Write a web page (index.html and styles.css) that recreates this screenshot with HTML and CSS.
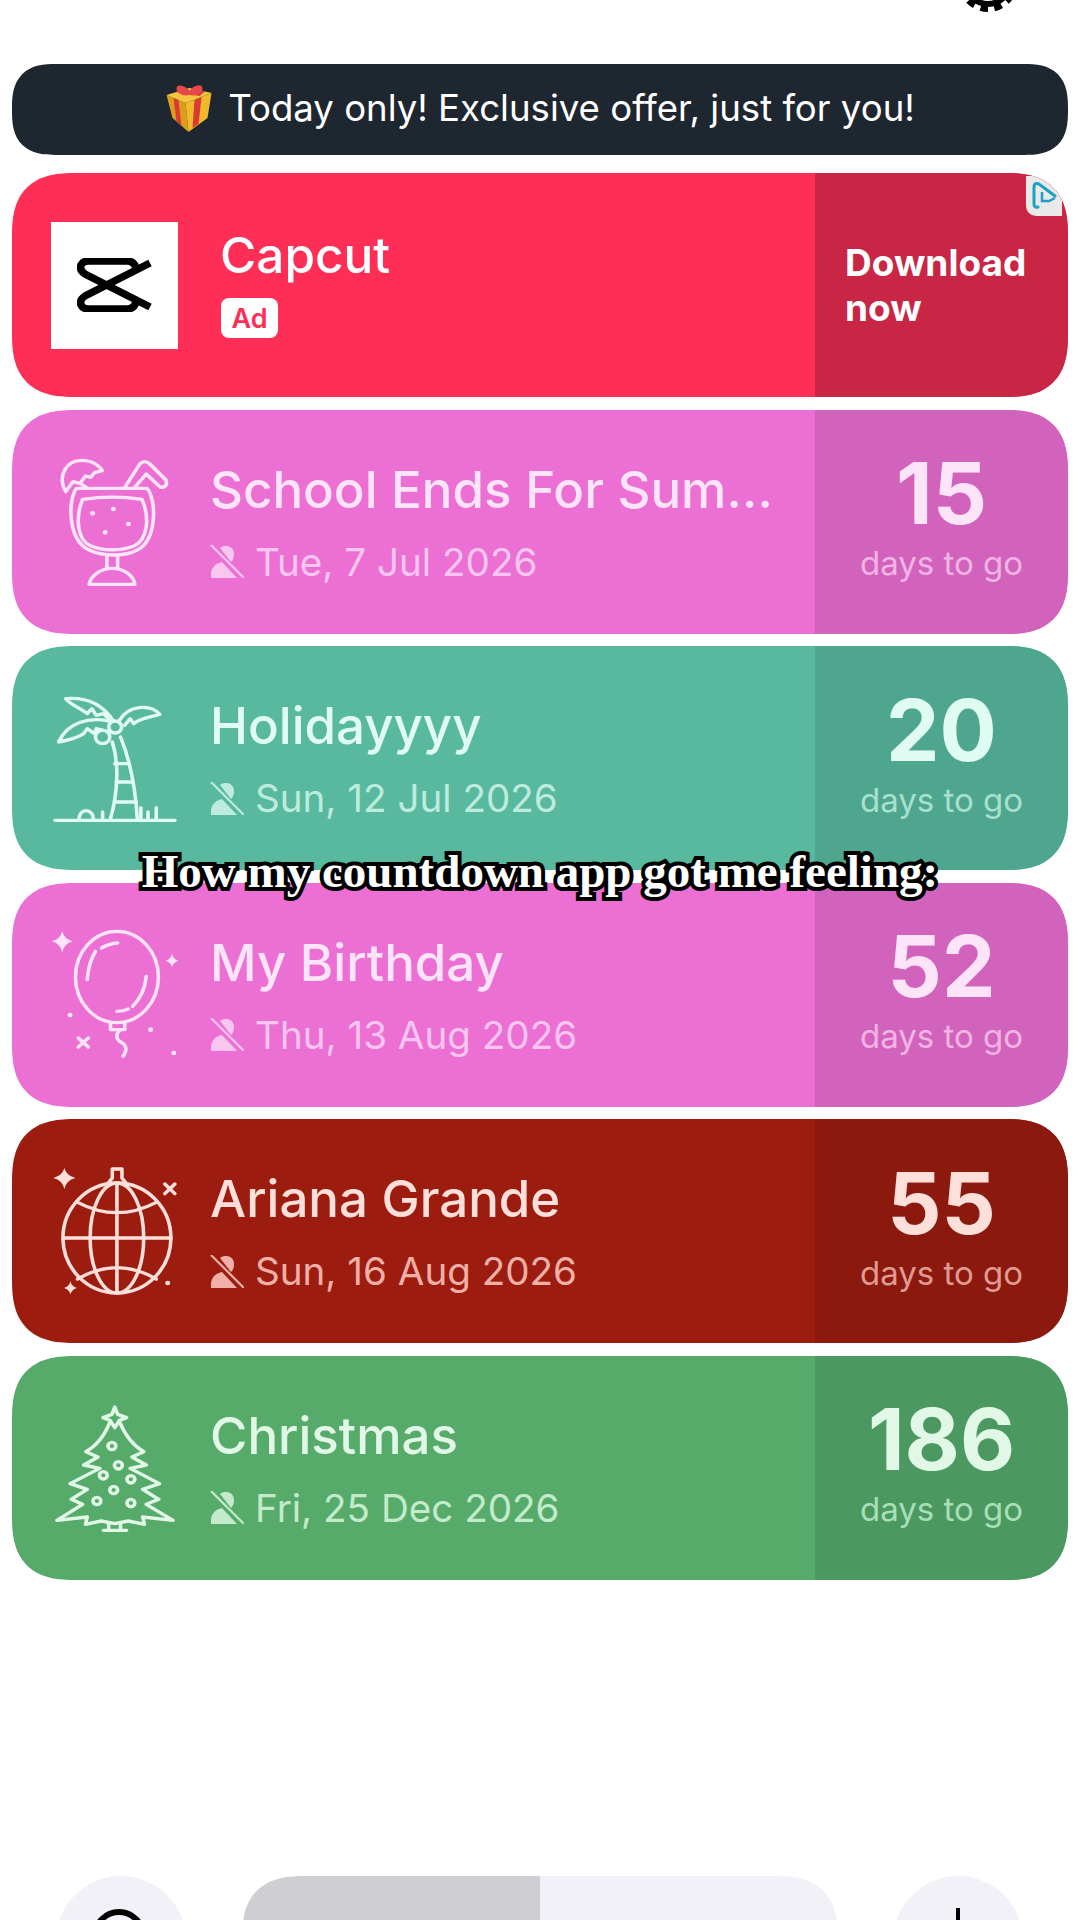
FILE: index.html
```html
<!DOCTYPE html>
<html lang="en">
<head>
  <meta charset="UTF-8">
  <meta name="viewport" content="width=device-width, initial-scale=1.0">
  <title>Countdown</title>
  <link rel="stylesheet" href="styles.css">
</head>
<body>

  <svg class="defs" width="0" height="0">
    <symbol id="mute" viewBox="0 0 34 33">
      <path d="M10 3C15 -1 24 1 24 9C24 13 23 15 21 17Z" fill="currentColor"/>
      <path d="M1 33V28C2 21 7 18 12 17L27 33Z" fill="currentColor"/>
      <path d="M1 0L34 33" stroke="currentColor" stroke-width="2.2" fill="none"/>
    </symbol>
  </svg>

  <header class="top">
    <svg class="gear" viewBox="0 0 60 60">
      <circle cx="30" cy="30" r="22" fill="none" stroke="#000" stroke-width="6"/>
      <circle cx="30" cy="30" r="27" fill="none" stroke="#000" stroke-width="6" stroke-dasharray="7.6 6.5"/>
    </svg>
  </header>

  <div class="banner">
    <svg class="gift" viewBox="0 -1 47 48">
      <path d="M1 10L20 18L23 47L7 33Z" fill="#dc9c1c"/>
      <path d="M20 18L46 8L42 33L23 47Z" fill="#f4b82c"/>
      <path d="M1 10L24 3L46 8L20 18Z" fill="#f6c640"/>
      <path d="M8 13L13 15L16 41L11 36ZM29 15L36 12L33 39L27 43Z" fill="#d93a32"/>
      <path d="M10 7L15 5L40 6L34 11Z" fill="#d93a32"/>
      <path d="M24 10C16 12 8 6 12 1C16 -1 22 3 24 6C27 1 33 -1 36 1C40 6 32 12 24 10Z" fill="#e8484a"/>
    </svg>
    <span>Today only! Exclusive offer, just for you!</span>
  </div>

  <div class="list">

    <div class="card ad">
      <div class="main">
        <div class="logo">
          <svg viewBox="0 0 76 54" width="76" height="54">
            <path d="M73 5L8 38Q2 42 4 47Q6 51 11 51H50Q57 51 59 44" fill="none" stroke="#000" stroke-width="7.5"/>
            <path d="M73 49L8 16Q2 12 4 7Q6 3 11 3H50Q57 3 59 10" fill="none" stroke="#000" stroke-width="7.5"/>
          </svg>
        </div>
        <div class="text">
          <div class="name">Capcut</div>
          <div class="badge">Ad</div>
        </div>
      </div>
      <div class="side"><div class="cta">Download now</div></div>
      <div class="adtag">
        <svg viewBox="0 0 26 30" width="26" height="30">
          <path d="M7 26Q3 27 3 23V6Q3 1 8 3L24 15" fill="none" stroke="#1aa0c4" stroke-width="3" stroke-linecap="round"/>
          <path d="M11 11V20H18L24 17" fill="none" stroke="#1aa0c4" stroke-width="2.5"/>
        </svg>
      </div>
    </div>

    <div class="card pink">
      <div class="main">
        <svg class="icon" viewBox="138 156 372 420" preserveAspectRatio="none">
          <path d="M215 265C190 300 190 420 250 450C290 470 350 470 385 450C440 420 440 300 412 265Z"/>
          <path d="M232 298Q315 285 398 298C420 350 415 420 375 438C340 453 290 453 255 438C215 420 212 350 232 298Z"/>
          <path d="M300 465V505M330 465V505M250 553C255 525 285 505 315 505C345 505 375 525 378 553Z"/>
          <path d="M350 262L392 192Q405 178 420 192L465 240Q472 262 450 262L410 222L378 262"/>
          <path d="M185 275C160 230 185 175 240 182C265 185 280 200 287 212L265 218L255 232L240 228L225 250L205 245ZM225 250L245 264"/>
          <g class="dots">
            <circle cx="260" cy="340" r="7"/><circle cx="318" cy="327" r="7"/><circle cx="360" cy="372" r="7"/><circle cx="295" cy="397" r="7"/>
          </g>
        </svg>
        <div class="text">
          <div class="name">School Ends For Sum…</div>
          <div class="date"><svg class="mute"><use href="#mute"/></svg>Tue, 7 Jul 2026</div>
        </div>
      </div>
      <div class="side"><div class="num">15</div><div class="togo">days to go</div></div>
    </div>

    <div class="card teal">
      <div class="main">
        <svg class="icon" viewBox="138 863 372 420" preserveAspectRatio="none">
          <path d="M155 1260H490"/>
          <path d="M310 1255C330 1180 335 1090 315 1025M385 1255C380 1170 365 1080 338 1010"/>
          <path d="M322 1090H362M326 1145H372M326 1205H382"/>
          <circle cx="323" cy="980" r="18"/><circle cx="288" cy="1010" r="20"/>
          <path d="M222 1255A20 24 0 1 1 262 1255M288 1255V1235M395 1255V1222M415 1255V1235M438 1255V1222"/>
          <path d="M318 962C290 915 245 890 185 895C200 915 230 925 245 940L258 925L270 945L290 940L310 960"/>
          <path d="M305 962C250 950 190 965 165 1025C190 1020 215 1015 235 1000L245 985L265 1000L270 985L290 990"/>
          <path d="M335 960C360 915 420 910 448 942C430 950 400 950 375 970L365 955L350 975"/>
        </svg>
        <div class="text">
          <div class="name">Holidayyyy</div>
          <div class="date"><svg class="mute"><use href="#mute"/></svg>Sun, 12 Jul 2026</div>
        </div>
      </div>
      <div class="side"><div class="num">20</div><div class="togo">days to go</div></div>
    </div>

    <div class="card pink">
      <div class="main">
        <svg class="icon" viewBox="138 256 372 420" preserveAspectRatio="none">
          <ellipse cx="328" cy="412" rx="116" ry="137"/>
          <path d="M285 325Q305 312 330 310M245 420Q248 370 268 335M410 410Q405 465 372 500M328 515Q345 515 360 508"/>
          <path d="M310 550V570H350V550M335 572Q320 590 335 605Q365 620 345 650"/>
          <path class="solid" d="M175 275Q180 298 205 305Q180 312 175 338Q170 312 146 305Q170 298 175 275ZM482 342Q485 358 500 363Q485 368 482 382Q479 368 464 363Q479 358 482 342Z"/>
          <path d="M220 595L248 622M248 595L220 622"/>
          <g class="dots">
            <circle cx="197" cy="526" r="7"/><circle cx="422" cy="570" r="7"/><circle cx="487" cy="640" r="7"/>
          </g>
        </svg>
        <div class="text">
          <div class="name">My Birthday</div>
          <div class="date"><svg class="mute"><use href="#mute"/></svg>Thu, 13 Aug 2026</div>
        </div>
      </div>
      <div class="side"><div class="num">52</div><div class="togo">days to go</div></div>
    </div>

    <div class="card red">
      <div class="main">
        <svg class="icon" viewBox="138 964 372 420" preserveAspectRatio="none">
          <ellipse cx="328" cy="1195" rx="151" ry="165"/>
          <ellipse cx="328" cy="1195" rx="75" ry="165"/>
          <path d="M328 1030V1360M178 1195H479M218 1088Q328 1150 438 1088M218 1318Q328 1250 438 1318"/>
          <path d="M300 1035L315 1015V988H342V1015L357 1035"/>
          <path class="solid" d="M181 985Q186 1008 212 1015Q186 1022 181 1048Q176 1022 150 1015Q176 1008 181 985ZM198 1325Q201 1340 216 1345Q201 1350 198 1364Q195 1350 180 1345Q195 1340 198 1325Z"/>
          <path d="M462 1033L490 1062M490 1033L462 1062"/>
          <g class="dots"><circle cx="470" cy="1330" r="7"/></g>
        </svg>
        <div class="text">
          <div class="name">Ariana Grande</div>
          <div class="date"><svg class="mute"><use href="#mute"/></svg>Sun, 16 Aug 2026</div>
        </div>
      </div>
      <div class="side"><div class="num">55</div><div class="togo">days to go</div></div>
    </div>

    <div class="card green">
      <div class="main">
        <svg class="icon" viewBox="138 201 372 420" preserveAspectRatio="none">
          <path d="M322 228L330 250L355 260L335 268L322 290L309 268L289 260L314 250Z"/>
          <path d="M335 272C350 310 375 345 403 362L370 378L410 402L365 412L447 458L400 475L445 505L410 520L485 568L400 558L405 580L360 570L322 578L284 570L240 580L245 558L160 568L232 520L200 505L245 475L197 458L280 412L235 402L275 378L241 362C270 345 295 310 309 272"/>
          <path d="M305 578V597M338 578V597M290 598H355"/>
          <circle cx="314" cy="345" r="11"/><circle cx="332" cy="403" r="11"/><circle cx="290" cy="433" r="11"/><circle cx="367" cy="445" r="11"/><circle cx="319" cy="477" r="11"/><circle cx="272" cy="510" r="11"/><circle cx="367" cy="516" r="11"/>
        </svg>
        <div class="text">
          <div class="name">Christmas</div>
          <div class="date"><svg class="mute"><use href="#mute"/></svg>Fri, 25 Dec 2026</div>
        </div>
      </div>
      <div class="side"><div class="num">186</div><div class="togo">days to go</div></div>
    </div>

  </div>

  <div class="caption">How my countdown app got me feeling:</div>

  <footer class="bottom">
    <div class="round">
      <svg class="tool" viewBox="0 0 60 60"><circle cx="28" cy="28" r="24" fill="none" stroke="#000" stroke-width="6"/></svg>
    </div>
    <div class="tabs">
      <div class="tab on"></div>
      <div class="tab"></div>
    </div>
    <div class="round">
      <svg class="tool" viewBox="0 0 60 60"><path d="M30 0V60M0 30H60" stroke="#000" stroke-width="4"/></svg>
    </div>
  </footer>

</body>
</html>
```

FILE: styles.css
```css
html, body { margin: 0; padding: 0; }
body {
  position: relative;
  width: 1080px;
  height: 1920px;
  overflow: hidden;
  background: #fff;
  font-family: Inter, "Liberation Sans", sans-serif;
  display: flex;
  flex-direction: column;
}
.defs { position: absolute; }

.top {
  height: 64px;
  flex: none;
  overflow: hidden;
  display: flex;
  justify-content: flex-end;
  padding-right: 62px;
}
.gear { width: 60px; height: 60px; margin-top: -48px; }

.banner {
  flex: none;
  height: 91px;
  margin: 0 12px 18px;
  padding-bottom: 4px;
  box-sizing: border-box;
  border-radius: 44px;
  corner-shape: superellipse(1.4);
  background: #1e2630;
  color: #fff;
  font-size: 36.6px;
  display: flex;
  align-items: center;
  justify-content: center;
  gap: 15px;
}
.gift { width: 48px; height: 48px; }

.list { display: flex; flex-direction: column; gap: 12.6px; padding: 0 12px; }

.card {
  position: relative;
  height: 224px;
  border-radius: 64px;
  corner-shape: superellipse(1.4);
  overflow: hidden;
  display: flex;
}
.main { flex: 1; display: flex; align-items: center; padding-left: 37px; gap: 28px; min-width: 0; }
.icon {
  width: 133px;
  height: 140px;
  flex: none;
  fill: none;
  stroke: currentColor;
  stroke-width: 10;
  stroke-linejoin: round;
  stroke-linecap: round;
}
.icon .dots, .icon .solid { fill: currentColor; stroke: none; }

.name { font-size: 51px; font-weight: 500; line-height: 62px; white-space: nowrap; }
.date {
  font-size: 38.6px;
  line-height: 46px;
  margin-top: 18px;
  display: flex;
  align-items: center;
  gap: 11px;
  white-space: nowrap;
}
.mute { width: 34px; height: 33px; flex: none; }

.side {
  width: 253px;
  flex: none;
  display: flex;
  flex-direction: column;
  align-items: center;
  justify-content: center;
  padding-bottom: 8px;
  box-sizing: border-box;
}
.num { font-size: 85px; font-weight: 700; line-height: 84px; }
.togo { font-size: 33px; line-height: 40px; margin-top: 7px; }

.pink { background: #ec70d4; color: #fde4f9; }
.pink .side { background: #d263bc; }
.pink .date { color: #f9c6f0; }
.pink .togo { color: #f2b4e4; }
.teal { background: #58b99e; color: #dffbf2; }
.teal .side { background: #4fa68e; }
.teal .date { color: #bdebdd; }
.teal .togo { color: #a8e0ce; }
.red { background: #9c1d10; color: #ffdfda; }
.red .side { background: #8c190e; }
.red .date { color: #f0b0a8; }
.red .togo { color: #e09a92; }
.green { background: #56ab6b; color: #e2f8e6; }
.green .side { background: #4b9961; }
.green .date { color: #c3ebcb; }
.green .togo { color: #a8dfb8; }

.ad { background: #ff2e56; color: #fff; }
.ad .main { padding-left: 39px; gap: 42px; }
.ad .text { padding-bottom: 8px; }
.ad .side { background: #c92544; align-items: flex-start; padding: 0 0 0 30px; }
.logo {
  width: 127px;
  height: 127px;
  background: #fff;
  display: flex;
  align-items: center;
  justify-content: center;
  flex: none;
}
.ad .name { font-size: 49.5px; line-height: 62px; }
.badge {
  width: 57px;
  height: 40px;
  margin: 12px 0 0 1px;
  border-radius: 8px;
  background: #fff;
  color: #ff2e56;
  font-size: 27px;
  font-weight: 600;
  display: flex;
  align-items: center;
  justify-content: center;
}
.cta { font-size: 37px; font-weight: 700; line-height: 45px; width: 200px; }
.adtag {
  position: absolute;
  top: 3px;
  right: 6px;
  width: 36px;
  height: 40px;
  background: #e9e9e9;
  border-radius: 0 0 0 10px;
  display: flex;
  align-items: center;
  justify-content: center;
}

.caption {
  position: absolute;
  left: 0;
  right: 0;
  top: 844px;
  text-align: center;
  font-family: "Liberation Serif", serif;
  font-weight: 700;
  font-size: 47px;
  line-height: 54px;
  color: #fff;
  -webkit-text-stroke: 8px #000;
  paint-order: stroke fill;
}

.bottom {
  margin-top: auto;
  height: 44px;
  flex: none;
  overflow: hidden;
  display: flex;
  justify-content: space-between;
  padding: 0 57px 0 56px;
}
.round {
  width: 130px;
  height: 130px;
  border-radius: 50%;
  background: #f2f1f7;
  display: flex;
  justify-content: center;
  padding-top: 32px;
  box-sizing: border-box;
}
.tool { width: 60px; height: 60px; }
.tabs {
  width: 596px;
  height: 130px;
  border-radius: 64px;
  corner-shape: superellipse(1.4);
  overflow: hidden;
  display: flex;
}
.tab { flex: 1; background: #f2f1f7; }
.tab.on { background: #cfced3; }
```
